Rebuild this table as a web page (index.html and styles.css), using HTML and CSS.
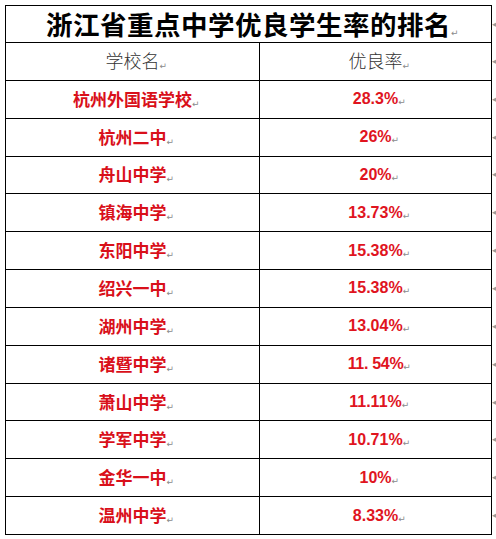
FILE: index.html
```html
<!DOCTYPE html>
<html lang="zh-CN">
<head>
<meta charset="utf-8">
<link rel="stylesheet" href="styles.css">
</head>
<body>
<table class="rank">
  <colgroup>
    <col class="col1">
    <col class="col2">
    <col class="col3">
  </colgroup>
  <tr class="title-row">
    <td class="title" colspan="2">浙江省重点中学优良学生率的排名<span class="pm">↵</span></td>
    <td class="endmark">◂</td>
  </tr>
  <tr class="head">
    <td>学校名<span class="pm">↵</span></td>
    <td>优良率<span class="pm">↵</span></td>
    <td class="endmark">◂</td>
  </tr>
  <tr><td class="name">杭州外国语学校<span class="pm">↵</span></td><td class="num">28.3%<span class="pm">↵</span></td><td class="endmark">◂</td></tr>
  <tr><td class="name">杭州二中<span class="pm">↵</span></td><td class="num">26%<span class="pm">↵</span></td><td class="endmark">◂</td></tr>
  <tr><td class="name">舟山中学<span class="pm">↵</span></td><td class="num">20%<span class="pm">↵</span></td><td class="endmark">◂</td></tr>
  <tr><td class="name">镇海中学<span class="pm">↵</span></td><td class="num">13.73%<span class="pm">↵</span></td><td class="endmark">◂</td></tr>
  <tr><td class="name">东阳中学<span class="pm">↵</span></td><td class="num">15.38%<span class="pm">↵</span></td><td class="endmark">◂</td></tr>
  <tr><td class="name">绍兴一中<span class="pm">↵</span></td><td class="num">15.38%<span class="pm">↵</span></td><td class="endmark">◂</td></tr>
  <tr><td class="name">湖州中学<span class="pm">↵</span></td><td class="num">13.04%<span class="pm">↵</span></td><td class="endmark">◂</td></tr>
  <tr><td class="name">诸暨中学<span class="pm">↵</span></td><td class="num alt">11. 54%<span class="pm">↵</span></td><td class="endmark">◂</td></tr>
  <tr><td class="name">萧山中学<span class="pm">↵</span></td><td class="num">11.11%<span class="pm">↵</span></td><td class="endmark">◂</td></tr>
  <tr><td class="name">学军中学<span class="pm">↵</span></td><td class="num">10.71%<span class="pm">↵</span></td><td class="endmark">◂</td></tr>
  <tr><td class="name">金华一中<span class="pm">↵</span></td><td class="num">10%<span class="pm">↵</span></td><td class="endmark">◂</td></tr>
  <tr><td class="name">温州中学<span class="pm">↵</span></td><td class="num">8.33%<span class="pm">↵</span></td><td class="endmark">◂</td></tr>
</table>
</body>
</html>
```
FILE: styles.css
```css
html, body {
  margin: 0;
  padding: 0;
  background: #ffffff;
}

body {
  padding: 5px 0 0 5px;
  font-family: "Noto Sans CJK SC", sans-serif;
}

.rank {
  border-collapse: collapse;
  table-layout: fixed;
  width: 491px;
}

.col1 {
  width: 254px;
}

.col2 {
  width: 232px;
}

.col3 {
  width: 5px;
}

.rank td {
  border: 1px solid #000;
  padding: 0;
  text-align: center;
  vertical-align: middle;
  white-space: nowrap;
  line-height: 1;
  overflow: visible;
}

.rank tr {
  height: 37.85px;
}

.rank .title-row {
  height: 37px;
}

.rank td.endmark {
  border: none;
  text-align: left;
  color: #9a9a9a;
  font-size: 9px;
  font-family: "DejaVu Sans", sans-serif;
}

.title {
  font-family: "Noto Sans CJK SC", sans-serif;
  font-weight: 700;
  font-size: 26.5px;
  color: #000;
  letter-spacing: 0.5px;
}

.head td {
  font-weight: 300;
  font-size: 18px;
  color: #333;
}

.name {
  font-family: "Noto Sans CJK SC", sans-serif;
  font-weight: 700;
  font-size: 17px;
  color: #d9101a;
}

.num {
  font-family: "Liberation Sans", Arial, sans-serif;
  font-weight: 700;
  font-size: 16px;
  color: #e0141e;
}

.num.alt {
  letter-spacing: -0.3px;
}

.pm {
  display: inline-block;
  width: 8px;
  margin-right: -8px;
  font-family: "DejaVu Sans", sans-serif;
  font-size: 9px;
  font-weight: 400;
  letter-spacing: 0;
  color: #8a8a8a;
  vertical-align: -1px;
  text-align: left;
}
```
